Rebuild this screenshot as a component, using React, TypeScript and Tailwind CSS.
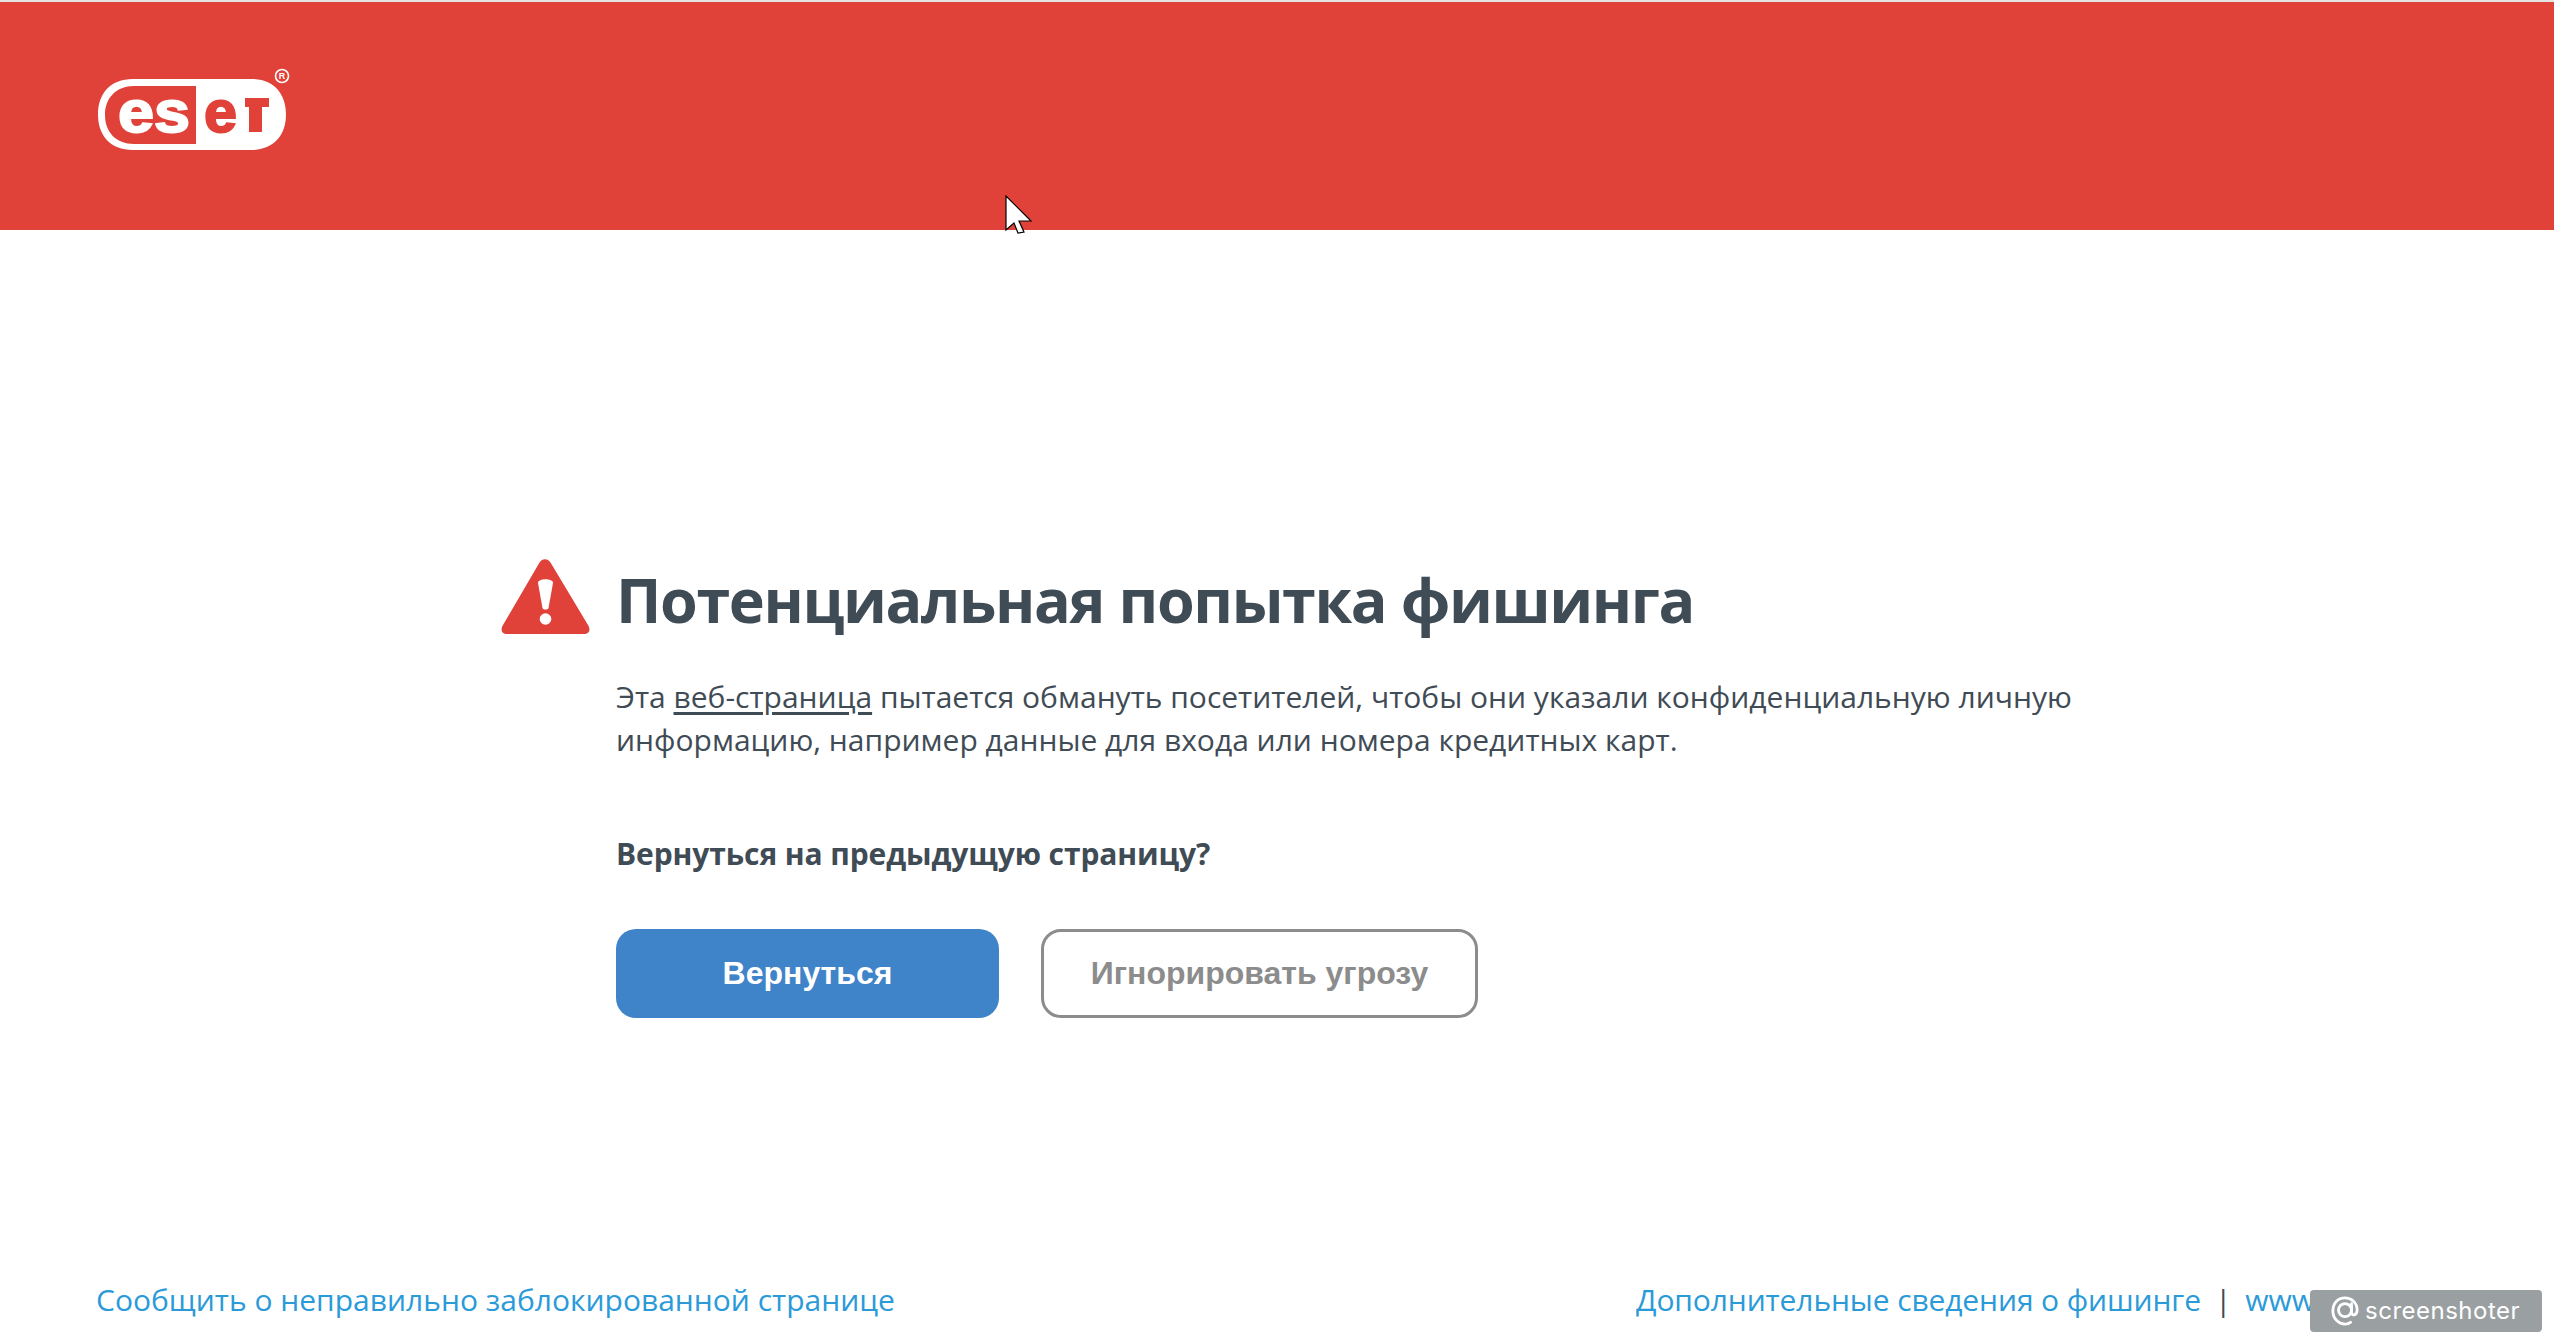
export default function App() {
  return (
    <div className="relative flex h-[1344px] w-[2554px] flex-col overflow-hidden bg-white font-['Open_Sans',sans-serif] text-[#3f4b55]">
      <div className="h-[2px] bg-[#e4e4e4]" />
      <header className="relative h-[228px] bg-[#e04239] pl-[98px] pt-[64px]">
        <svg width="194" height="90" viewBox="0 0 194 90" className="block">
          <path fillRule="evenodd" fill="#fff" d="M35 13H153C176 13 188 28 188 48.5C188 69 176 84 153 84H35C12 84 0 69 0 48.5C0 28 12 13 35 13ZM36 20H98V78H36C18 78 7 66 7 49C7 32 18 20 36 20Z" />
          <text x="20" y="65.5" fontFamily="'Liberation Sans',sans-serif" fontWeight="700" fontSize="60" fill="#fff" textLength="72" lengthAdjust="spacingAndGlyphs" stroke="#fff" strokeWidth="2">es</text>
          <text x="106" y="65.5" fontFamily="'Liberation Sans',sans-serif" fontWeight="700" fontSize="60" fill="#e04239" textLength="33" lengthAdjust="spacingAndGlyphs" stroke="#e04239" strokeWidth="2">e</text>
          <path fill="#e04239" d="M147 32H171V41H164V66H151V41H147Z" />
          <circle cx="184" cy="10" r="6.5" fill="none" stroke="#fff" strokeWidth="1.6" />
          <text x="184" y="13" textAnchor="middle" fontFamily="'Liberation Sans',sans-serif" fontWeight="700" fontSize="9" fill="#fff">R</text>
        </svg>
        <svg width="28" height="42" viewBox="0 0 28 42" className="absolute left-[1005px] top-[193px]">
          <path d="M1 1V35L9 28L13 38L19 37L14 26H26Z" fill="#fff" stroke="#000" strokeWidth="1.2" strokeLinejoin="miter" />
        </svg>
      </header>

      <main className="flex-1 pl-[616px]">
        <div className="relative pt-[329px]">
          <svg width="90" height="76" viewBox="0 0 90 76" className="absolute left-[-115px] top-[329px]">
            <path fill="#e04239" d="M38.5 3.5C41 -1 47 -1 49.5 3.5L87 66C90 71 88 75 83 75H6C1 75 -1 71 2 66Z" />
            <path fill="#fff" d="M37 24C37 19 52 19 52 24L47.5 49C47 51 42 51 41.5 49Z" />
            <circle cx="44.5" cy="60" r="5.8" fill="#fff" />
          </svg>
          <h1 className="text-[61px] font-bold leading-[82px] tracking-[-1.4px] whitespace-nowrap">Потенциальная попытка фишинга</h1>
          <p className="mt-[34px] text-[30px] leading-[43px] whitespace-nowrap">
            Эта <span className="underline underline-offset-4">веб-страница</span> пытается обмануть посетителей, чтобы они указали конфиденциальную личную
            <br />
            информацию, например данные для входа или номера кредитных карт.
          </p>
          <p className="mt-[71px] text-[30px] font-bold leading-[43px] tracking-[-0.1px] whitespace-nowrap">Вернуться на предыдущую страницу?</p>
          <div className="mt-[54px] flex gap-[42px] font-['Liberation_Sans',sans-serif] text-[32px] font-bold">
            <button className="flex h-[89px] w-[383px] items-center justify-center rounded-[20px] bg-[#3f83c8] pb-[2px] text-white">Вернуться</button>
            <button className="flex h-[89px] w-[437px] items-center justify-center rounded-[20px] border-[3px] border-[#8c8c8c] bg-white pb-[2px] text-[#8c8c8c]">Игнорировать угрозу</button>
          </div>
        </div>
      </main>

      <footer className="flex h-[66px] justify-between pl-[96px] text-[30px] leading-[43px] whitespace-nowrap text-[#2b9ad9]">
        <a>Сообщить о неправильно заблокированной странице</a>
        <div className="flex w-[918px] shrink-0 overflow-hidden">
          <a className="tracking-[-0.12px]">Дополнительные сведения о фишинге</a>
          <span className="mx-[14px] text-[#3f4b55]">|</span>
          <a>www.eset.com</a>
        </div>
      </footer>

      <div className="absolute left-[2310px] top-[1290px] flex h-[42px] w-[232px] items-center gap-[6px] rounded-[4px] bg-[#9a9fa1] pl-[21px] font-['Inter',sans-serif] text-[24px] tracking-[0.5px] text-white">
        <svg width="28" height="32" viewBox="0 0 30 32" fill="none" stroke="#fff" strokeWidth="3" strokeLinecap="round" className="shrink-0">
          <circle cx="15" cy="15" r="7" />
          <path d="M22 8V17C22 22 28 21 28 15C28 7 22 2 15 2C7 2 2 8 2 16C2 24 8 30 15 30C18 30 20 29 21 28" />
        </svg>
        <span>screenshoter</span>
      </div>
    </div>
  );
}
